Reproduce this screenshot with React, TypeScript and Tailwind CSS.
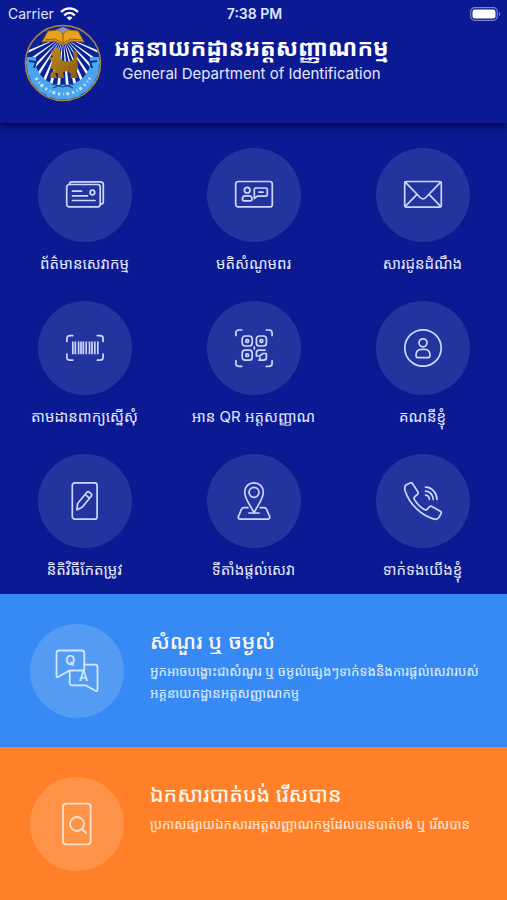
import type { ReactNode } from 'react';

const rays = [-66, -54, -43, -33, -23, -14, -5, 5, 14, 23, 33, 43, 54, 66];

function Emblem() {
  return (
    <svg className="w-[78px] h-[78px] shrink-0" viewBox="0 0 78 78" aria-hidden="true">
      <defs>
        <clipPath id="disc">
          <circle cx="39" cy="39" r="36.5" />
        </clipPath>
        <linearGradient id="gold" x1="0" y1="0" x2="1" y2="1">
          <stop offset="0" stopColor="#c08a1c" />
          <stop offset="1" stopColor="#8a5c10" />
        </linearGradient>
      </defs>
      <circle cx="39" cy="39" r="37" fill="#0b2394" />
      <g clipPath="url(#disc)">
        {/* 빛줄기 */}
        {rays.map((deg) => (
          <path key={deg} d="M39 14 L36.8 84 H41.2 Z" fill="#f4f8ff" transform={`rotate(${deg} 39 12)`} />
        ))}
        {/* 하단 리본 */}
        <path d="M1 33 L12 33 L12 42 C15 53 25 61 39 61 C53 61 63 53 66 42 L66 33 L77 33 V78 H1 Z" fill="#4aa5ee" />
        <path d="M12 54 C19 65 28 70 39 70 C50 70 59 65 66 54" fill="none" stroke="#c9e5fd" strokeWidth="3" strokeDasharray="2 3 1 2 3 3" />
        <path d="M28 60 L39 63 L50 60 M29 64 L39 60 L49 64" fill="none" stroke="#164a94" strokeWidth="1.2" />
        <path d="M5 37 L12 38 L10 44 M73 37 L66 38 L68 44" fill="none" stroke="#0b2f7c" strokeWidth="2" />
        {/* 책 */}
        <path d="M31 6 L39 3 L47 6 L45 14 H33 Z" fill="#8d92cc" />
        <path d="M24 7 L35 6 L39 10 L43 6 L54 7 L60 18 L47 17 L39 21 L31 17 L18 18 Z" fill="#e8a21d" stroke="#9b681a" strokeWidth="1" />
        <path d="M39 10 V20 M21 16 L31 15 L39 19 L47 15 L57 16" fill="none" stroke="#8b5a15" strokeWidth="1" />
        {/* 사자 */}
        <path
          d="M27 29 C27 26 30 27 32 23 C34 24 37 26 37 30 C36 33 36 36 40 37 C45 38 49 37 50 34 C51 31 47 28 50 27 C54 28 54 32 53 36 C54 40 55 45 52 48 L54 54 H46 L47 50 L43 47 L39 48 L40 54 H34 L34 49 H31 L33 54 H26 L27 49 L31 46 L26 44 L28 38 L25 34 L29 33 Z"
          fill="url(#gold)"
        />
      </g>
      <circle cx="39" cy="39" r="37.5" fill="none" stroke="#a7864c" strokeWidth="1.6" />
    </svg>
  );
}

function LineIcon({ children }: { children: ReactNode }) {
  return (
    <svg
      className="w-[38px] h-[38px] overflow-visible"
      viewBox="0 0 38 38"
      fill="none"
      stroke="currentColor"
      strokeWidth="1.7"
      strokeLinecap="round"
      strokeLinejoin="round"
      aria-hidden="true"
    >
      {children}
    </svg>
  );
}

const services = [
  {
    label: 'ព័ត៌មានសេវាកម្ម',
    icon: (
      <>
        <rect x="0.7" y="8.5" width="33.5" height="22.3" rx="2.5" />
        <path d="M3.5 8 C3.5 6.5 4.5 5.8 6 5.8 H34.5 C36.3 5.8 37.3 6.8 37.3 8.5 V25.5 C37.3 27.3 36.3 28.2 34.8 28.2" />
        <path d="M6.5 15.2 H15.5 M6.5 19.8 H21.5 M6.5 24.5 H29" />
        <circle cx="26.4" cy="16.5" r="2.3" />
      </>
    ),
  },
  {
    label: 'មតិសំណូមពរ',
    icon: (
      <>
        <rect x="0.7" y="5.5" width="36.6" height="25.4" rx="2.5" />
        <circle cx="12.2" cy="14.2" r="2.8" />
        <path d="M7.4 23 C7.4 20.8 8.5 19.8 10.5 19.8 H14 C16 19.8 17 20.8 17 23 C17 24.4 16.5 24.8 15.5 24.8 H9 C8 24.8 7.4 24.4 7.4 23 Z" />
        <path d="M20.5 12 H30.5 C31.7 12 32.3 12.7 32.3 13.7 V18.3 C32.3 19.5 31.7 20.1 30.5 20.1 H22.3 L19.3 22.6 V13.7 C19.3 12.7 19.7 12 20.5 12 Z M24 16.2 H28" />
      </>
    ),
  },
  {
    label: 'សារជូនដំណឹង',
    icon: (
      <>
        <rect x="0.7" y="5.5" width="36.6" height="25.6" rx="1.8" />
        <path d="M1.3 6.2 L16.2 21.5 C18 23.3 20 23.3 21.8 21.5 L36.7 6.2 M1.3 30.3 L13 18.3 M36.7 30.3 L25 18.3" />
      </>
    ),
  },
  {
    label: 'តាមដានពាក្យស្នើសុំ',
    icon: (
      <>
        <path d="M0.9 12.5 V9.5 C0.9 7.5 2 6.6 4 6.6 H6.7 M31.3 6.6 H34 C36 6.6 37.1 7.5 37.1 9.5 V12.5 M37.1 25 V28.2 C37.1 30.2 36 31.2 34 31.2 H31.3 M6.7 31.2 H4 C2 31.2 0.9 30.2 0.9 28.2 V25" />
        <path d="M6.8 12.5 V25.3 M9.3 12.5 V25.3 M12.6 12.5 V25.3 M15 12.5 V25.3 M17.3 12.5 V25.3 M20.2 12.5 V25.3 M23.5 12.5 V25.3 M26 12.5 V25.3 M28.8 12.5 V25.3 M31.8 12.5 V25.3" strokeLinecap="butt" />
      </>
    ),
  },
  {
    label: 'អាន QR អត្តសញ្ញាណ',
    icon: (
      <>
        <path d="M0.9 6.5 V4 C0.9 2 2 1 4 1 H6.7 M31.3 1 H34 C36 1 37.1 2 37.1 4 V6.5 M37.1 31.5 V34.5 C37.1 36.5 36 37.4 34 37.4 H31.3 M6.7 37.4 H4 C2 37.4 0.9 36.5 0.9 34.5 V31.5" />
        <rect x="7.2" y="7" width="10" height="10" rx="3" />
        <rect x="21.4" y="7" width="10" height="10" rx="3" />
        <rect x="7.2" y="21.2" width="10" height="10" rx="3" />
        <rect x="10.9" y="10.7" width="2.6" height="2.6" rx="0.8" />
        <rect x="25.1" y="10.7" width="2.6" height="2.6" rx="0.8" />
        <rect x="10.9" y="24.9" width="2.6" height="2.6" rx="0.8" />
        <path d="M19.3 18 V20 M21.4 27 V24 C21.4 22.2 22.5 21.2 24.2 21.2 H30 M31.4 25 V28.2 C31.4 30.2 30.3 31.2 28.5 31.2 H24 M21.4 27 H24.5 L28 24.5 H31.4 M25 30.6 V28.5" />
      </>
    ),
  },
  {
    label: 'គណនីខ្ញុំ',
    icon: (
      <>
        <circle cx="19" cy="19" r="18.2" />
        <circle cx="19" cy="13.8" r="4" />
        <path d="M12 26.2 C12 22.3 14.2 20.4 17.5 20.4 H20.5 C23.8 20.4 26 22.3 26 26.2 C26 28 25.3 28.7 23.7 28.7 H14.3 C12.7 28.7 12 28 12 26.2 Z" />
      </>
    ),
  },
  {
    label: 'និតិវិធីកែតម្រូវ',
    icon: (
      <>
        <rect x="6.3" y="0.8" width="24.8" height="36.4" rx="2.5" />
        <path d="M10.9 27.8 L11.6 21.5 L20.7 10.5 C21.5 9.5 22.3 9.4 23.2 10.1 L25 11.6 C25.9 12.4 26 13.2 25.2 14.2 L16.2 25.2 Z M19.2 12.4 L23.3 16.2" />
      </>
    ),
  },
  {
    label: 'ទីតាំងផ្តល់សេវា',
    icon: (
      <>
        <path d="M19 31 C17 25.5 9.7 17.5 9.7 10.2 C9.7 4.8 13.8 0.8 19 0.8 C24.2 0.8 28.3 4.8 28.3 10.2 C28.3 17.5 21 25.5 19 31 Z" />
        <circle cx="19" cy="10.3" r="5" />
        <path d="M12.8 25.7 H8.8 C7.6 25.7 7 26.2 6.4 27.3 L3.5 34.3 C2.8 36 3.6 37.2 5.3 37.2 H32.7 C34.4 37.2 35.2 36 34.5 34.3 L31.6 27.3 C31 26.2 30.4 25.7 29.2 25.7 H25.2 M14 31 H24" />
      </>
    ),
  },
  {
    label: 'ទាក់ទងយើងខ្ញុំ',
    icon: (
      <>
        <path d="M2 3 L6.2 0.9 C7.3 0.4 8 0.8 8.6 1.7 L13.8 9.8 C14.4 10.8 14.2 11.5 13.5 12.3 L11 14.5 C9.8 15.6 9.8 16.3 10.4 17.4 C12.7 21.4 16 25 20.4 27.6 C21.6 28.3 22.3 28.2 23.3 27.1 L25.4 24.8 C26.2 24 27 23.9 27.9 24.4 L36.3 29.2 C37.3 29.8 37.6 30.5 37.1 31.5 L35 35.4 C33.9 37.1 31.6 37.6 29.3 36.9 C17.5 33.3 5.5 22.5 1.2 9 C0.5 6.5 0.5 4.2 2 3 Z" />
        <path d="M21.6 5.2 C28 5.4 32.8 10.8 33 17.5 M21.6 9.2 C26 9.3 29 12.8 29.2 17.5 M21.6 13.2 C23.8 13.4 25.2 14.9 25.4 17.5" />
      </>
    ),
  },
];

const banners = [
  {
    title: 'សំណួរ ឬ ចម្ងល់',
    text: 'អ្នកអាចបង្ហោះជាសំណួរ ឬ ចម្ងល់ផ្សេងៗទាក់ទងនិងការផ្តល់សេវារបស់អគ្គនាយកដ្ឋានអត្តសញ្ញាណកម្ម',
    color: 'bg-[#378af3]',
    textColor: 'text-[#d3e7ff]',
    icon: (
      <>
        <path d="M13.7 20.5 L1.8 27 C0.9 27.4 0.5 27 0.5 26 V3 C0.5 1.3 1.3 0.5 3 0.5 H25.8 C27.5 0.5 28.3 1.3 28.3 3 V20.5 H15" />
        <path d="M28.3 14.7 H39 C40.7 14.7 41.5 15.5 41.5 17.2 V39.5 C41.5 41 40.8 41.4 39.5 40.8 L29.5 35.3 H16.2 C14.5 35.3 13.7 34.5 13.7 32.8 V20.5" />
        <text x="14.2" y="15.2" textAnchor="middle" fontSize="13" fontWeight="600" fill="currentColor" stroke="none">Q</text>
        <text x="27.6" y="31" textAnchor="middle" fontSize="13" fontWeight="600" fill="currentColor" stroke="none">A</text>
      </>
    ),
  },
  {
    title: 'ឯកសារបាត់បង់ រើសបាន',
    text: 'ប្រកាសផ្សាយឯកសារអត្តសញ្ញាណកម្មដែលបានបាត់បង់ ឬ រើសបាន',
    color: 'bg-[#ff8028]',
    textColor: 'text-[#ffe2cc]',
    icon: (
      <>
        <rect x="7" y="0.7" width="27.6" height="40.6" rx="3" />
        <circle cx="21" cy="21" r="7" />
        <path d="M26 26 L30 30" />
      </>
    ),
  },
];

export default function App() {
  return (
    <div className="min-h-screen bg-[#0b1a93] text-white font-['Inter','Noto_Sans_Khmer','Khmer_OS',sans-serif]">
      <header className="relative h-[123px] shadow-[0_3px_8px_rgba(0,0,40,0.7)]">
        {/* 상태 표시줄 */}
        <div className="grid grid-cols-3 items-center h-7 pl-2 pr-1.5 text-sm text-[#dfe5ff]">
          <div className="flex items-center gap-1.5">
            <span>Carrier</span>
            <svg className="w-[19px] h-[14px]" viewBox="0 0 19 14" fill="none" stroke="#ffffff" strokeWidth="2.4" aria-hidden="true">
              <path d="M1 5 C6 0.2 13 0.2 18 5 M4.2 8.3 C7.3 5.3 11.7 5.3 14.8 8.3" />
              <path d="M9.5 13.5 L6.6 10.6 C8.2 9.2 10.8 9.2 12.4 10.6 Z" fill="#ffffff" stroke="none" />
            </svg>
          </div>
          <span className="text-center font-semibold">7:38 PM</span>
          <svg className="w-[31px] h-[14px] justify-self-end" viewBox="0 0 31 14" aria-hidden="true">
            <rect x="0.7" y="0.7" width="26.6" height="12.6" rx="4" fill="none" stroke="#7a84cb" strokeWidth="1.2" />
            <rect x="2.5" y="2.4" width="23" height="9.2" rx="2.4" fill="#ffffff" />
            <path d="M29 5 C30.7 5.7 30.7 8.3 29 9 Z" fill="#7a84cb" />
          </svg>
        </div>
        <div className="flex items-start gap-3 -mt-1 pl-6">
          <Emblem />
          <div className="pt-2 text-center">
            <h1 className="text-[23px] leading-8 font-bold whitespace-nowrap">អគ្គនាយកដ្ឋានអត្តសញ្ញាណកម្ម</h1>
            <p className="text-[15px] leading-5 text-[#e3e8ff]">General Department of Identification</p>
          </div>
        </div>
      </header>

      {/* 서비스 메뉴 */}
      <nav className="grid grid-cols-3 pt-3">
        {services.map((service) => (
          <button key={service.label} type="button" className="flex flex-col items-center h-[153px] pt-[13px] text-[#e3e8ff]">
            <span className="flex items-center justify-center w-[94px] h-[94px] rounded-full bg-[#24349e] text-[#cdd8ff]">
              <LineIcon>{service.icon}</LineIcon>
            </span>
            <span className="mt-2 text-[15px] leading-7 whitespace-nowrap">{service.label}</span>
          </button>
        ))}
      </nav>

      {/* 하단 배너 */}
      {banners.map((banner) => (
        <button
          key={banner.title}
          type="button"
          className={`flex items-start gap-[26px] w-full h-[153px] pt-[30px] pl-[30px] pr-6 text-left ${banner.color}`}
        >
          <span className={`flex items-center justify-center w-[94px] h-[94px] shrink-0 rounded-full bg-white/15 ${banner.textColor}`}>
            <svg
              className="w-[42px] h-[42px] overflow-visible"
              viewBox="0 0 42 42"
              fill="none"
              stroke="currentColor"
              strokeWidth="1.8"
              strokeLinecap="round"
              strokeLinejoin="round"
              aria-hidden="true"
            >
              {banner.icon}
            </svg>
          </span>
          <span className="min-w-0">
            <span className="block text-[21px] leading-9 font-medium text-[#fff6ec]">{banner.title}</span>
            <span className={`block text-[13px] leading-[22px] font-medium ${banner.textColor}`}>{banner.text}</span>
          </span>
        </button>
      ))}
    </div>
  );
}
